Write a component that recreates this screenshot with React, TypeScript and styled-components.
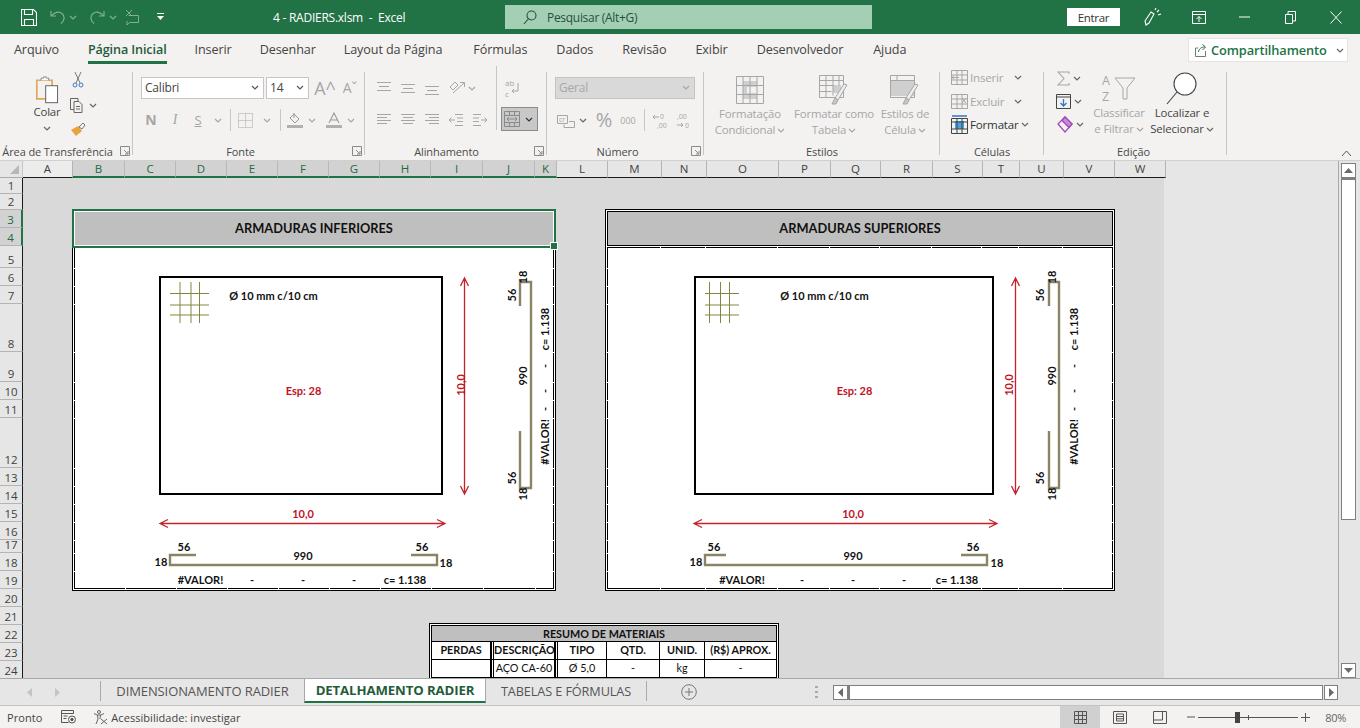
import React from "react";
import styled, { createGlobalStyle } from "styled-components";

const GREEN = "#217346";
const UI = '"Open Sans", "Noto Sans", sans-serif';
const CELL = 'Lato, "Liberation Sans", sans-serif';

const Global = createGlobalStyle`
  html, body { margin: 0; padding: 0; width: 1360px; height: 728px; overflow: hidden; background: #f3f2f1; }
  * { box-sizing: border-box; }
  svg { display: block; flex: none; }
`;

const Window = styled.div`
  width: 1360px; height: 728px; display: flex; flex-direction: column; overflow: hidden;
  font-family: ${UI}; font-size: 12px; color: #444; background: #f3f2f1;
`;

/* ---------- title bar ---------- */
const TitleBar = styled.header`
  height: 34px; flex: none; background: ${GREEN}; display: flex; align-items: center; color: #fff;
`;
const Slot = styled.span<{ $w: number; $ml?: number; $mt?: number }>`
  width: ${(p) => p.$w}px; margin-left: ${(p) => p.$ml ?? 0}px; margin-top: ${(p) => p.$mt ?? 0}px; flex: none;
  display: flex; align-items: center; justify-content: center;
`;
const DocTitle = styled.span`
  width: 135px; margin-left: 108px; flex: none; font-size: 12px; white-space: pre; letter-spacing: -0.25px;
`;
const SearchBox = styled.div`
  width: 367px; height: 24px; margin-left: 97px; flex: none; background: #a3d0b5; color: #24513a;
  display: flex; align-items: center; padding-left: 18px; gap: 10px; font-size: 12px; letter-spacing: -0.3px;
`;
const SignIn = styled.button`
  width: 53px; height: 18px; margin-left: 195px; flex: none; border: 0; padding: 0; background: #fff;
  color: #333; font-family: ${UI}; font-size: 11.5px; letter-spacing: -0.3px;
`;

/* ---------- tabs ---------- */
const TabBar = styled.nav`
  height: 32px; flex: none; display: flex; align-items: flex-start; padding-left: 14px; background: #f3f2f1;
`;
const Tab = styled.span<{ $active?: boolean; $mr?: number }>`
  height: 30px; margin-right: ${(p) => p.$mr ?? 29}px; padding-top: 7px; font-size: 12.6px; line-height: 18px; letter-spacing: -0.1px;
  color: ${(p) => (p.$active ? "#1f5c3a" : "#444")}; font-weight: ${(p) => (p.$active ? 600 : 400)};
  border-bottom: ${(p) => (p.$active ? `3px solid ${GREEN}` : "3px solid transparent")};
  white-space: nowrap;
`;
const ShareButton = styled.div`
  position: absolute; left: 1188px; top: 38px; width: 160px; height: 24px; background: #fff;
  border: 1px solid #e6e4e2; display: flex; align-items: center; padding-left: 6px; gap: 3px;
  color: ${GREEN}; font-size: 12.8px; font-weight: 600; letter-spacing: -0.1px;
`;

/* ---------- ribbon ---------- */
const Ribbon = styled.div`
  height: 95px; flex: none; display: flex; background: #f3f2f1; position: relative;
  border-bottom: 1px solid #d2d0ce;
`;
const Group = styled.section<{ $w: number }>`
  width: ${(p) => p.$w}px; height: 94px; flex: none; position: relative; display: flex; flex-direction: column;
  &::after { content: ""; position: absolute; right: 0; top: 6px; bottom: 5px; width: 1px; background: #c8c6c4; }
`;
const GroupBody = styled.div<{ $pl?: number; $dir?: string }>`
  height: 78px; flex: none; display: flex; flex-direction: ${(p) => p.$dir ?? "row"};
  padding-left: ${(p) => p.$pl ?? 0}px;
`;
const GroupLabel = styled.div<{ $pr?: number }>`
  height: 16px; text-align: center; padding-right: ${(p) => p.$pr ?? 0}px; font-size: 11px; line-height: 16px;
  letter-spacing: -0.1px; color: #4a4a4a; white-space: nowrap;
`;
const Launcher = styled.span`
  position: absolute; right: 3px; bottom: 4px;
`;
const ToolRow = styled.div<{ $mt?: number; $h?: number }>`
  display: flex; align-items: center; height: ${(p) => p.$h ?? 22}px; margin-top: ${(p) => p.$mt ?? 0}px;
`;
const Select = styled.div<{ $w: number; $ml?: number; $off?: boolean }>`
  width: ${(p) => p.$w}px; height: 22px; margin-left: ${(p) => p.$ml ?? 0}px; flex: none;
  background: ${(p) => (p.$off ? "#d9d9d9" : "#fff")}; border: 1px solid ${(p) => (p.$off ? "#c4c4c4" : "#c8c6c4")};
  display: flex; align-items: center; justify-content: space-between; padding: 0 4px 2px 3px;
  font-size: 12px; letter-spacing: -0.2px; color: ${(p) => (p.$off ? "#a8a8a8" : "#444")};
`;
const Divider = styled.span<{ $h: number; $ml?: number; $mr?: number }>`
  width: 1px; height: ${(p) => p.$h}px; flex: none; background: #c8c6c4;
  margin-left: ${(p) => p.$ml ?? 0}px; margin-right: ${(p) => p.$mr ?? 0}px;
`;
const Glyph = styled.span<{ $size?: number; $w?: number; $color?: string; $italic?: boolean; $serif?: boolean; $under?: boolean }>`
  font-size: ${(p) => p.$size ?? 13}px; font-weight: ${(p) => (p.$w ? p.$w : 400)}; color: ${(p) => p.$color ?? "#a6a6a6"};
  font-style: ${(p) => (p.$italic ? "italic" : "normal")};
  font-family: ${(p) => (p.$serif ? '"Liberation Serif", serif' : UI)};
  text-decoration: ${(p) => (p.$under ? "underline" : "none")}; line-height: 1;
`;
const MergeButton = styled.div<{ $ml: number }>`
  width: 37px; height: 24px; margin-left: ${(p) => p.$ml}px; flex: none; background: #c8c8c8; border: 1px solid #8a8a8a;
  display: flex; align-items: center; justify-content: space-between; padding: 0 4px 0 2px;
`;
const Large = styled.div<{ $w: number; $ml?: number; $off?: boolean }>`
  width: ${(p) => p.$w}px; margin-left: ${(p) => p.$ml ?? 0}px; flex: none; display: flex; flex-direction: column; align-items: center;
  color: ${(p) => (p.$off ? "#a6a6a6" : "#444")}; font-size: 11.4px; line-height: 16px; letter-spacing: -0.15px; white-space: nowrap;
`;
const LargeIcon = styled.div<{ $h?: number; $top?: number }>`
  height: ${(p) => p.$h ?? 33}px; margin-top: ${(p) => p.$top ?? 7}px; display: flex; align-items: center;
`;
const Line = styled.span`
  display: flex; align-items: center; gap: 2px; height: 16px;
`;
const CellTool = styled.div<{ $off?: boolean }>`
  height: 23.5px; display: flex; align-items: center; gap: 2px; padding-left: 11px; white-space: nowrap;
  font-size: 11.6px; letter-spacing: -0.2px; color: ${(p) => (p.$off ? "#a6a6a6" : "#333")};
`;
const StackCol = styled.div<{ $w: number }>`
  width: ${(p) => p.$w}px; flex: none; padding-top: 1px; display: flex; flex-direction: column;
`;
const Collapse = styled.span`
  position: absolute; right: 8px; bottom: 3px;
`;

/* ---------- grid ---------- */
const Workspace = styled.div`
  height: 517px; flex: none; display: flex; background: #e6e6e6;
`;
const GridColumn = styled.div`
  width: 1339px; flex: none; display: flex; flex-direction: column; border-right: 1px solid #a8a8a8;
`;
const ColHeaders = styled.div`
  height: 17px; flex: none; display: flex; background: #e6e6e6;
`;
const Corner = styled.div`
  width: 23px; flex: none; background: #e6e6e6; border-right: 1px solid #c8c8c8; border-bottom: 1px solid #aaa;
  display: flex; align-items: flex-end; justify-content: flex-end; padding: 0 3px 3px 0;
`;
const ColHead = styled.div<{ $w: number; $sel?: boolean; $light?: boolean }>`
  width: ${(p) => p.$w}px; flex: none; text-align: center; font-size: 11.5px; line-height: 15px;
  color: ${(p) => (p.$sel ? "#1f6b42" : "#3f3f3f")};
  background: ${(p) => (p.$sel ? "#d2d2d2" : p.$light ? "#ececec" : "#e6e6e6")};
  border-right: 1px solid ${(p) => (p.$sel ? "#b8b8b8" : "#b4b4b4")};
  border-bottom: ${(p) => (p.$sel ? `2px solid ${GREEN}` : "1px solid #1a1a1a")};
`;
const GridBody = styled.div`
  flex: 1; min-height: 0; display: flex; overflow: hidden;
`;
const RowHeads = styled.div`
  width: 23px; flex: none; display: flex; flex-direction: column; background: #e6e6e6;
`;
const RowHead = styled.div<{ $h: number; $sel?: boolean }>`
  height: ${(p) => p.$h}px; flex: none; display: flex; align-items: flex-end; justify-content: center;
  font-size: 11.5px; line-height: 15px; color: ${(p) => (p.$sel ? "#1f6b42" : "#3f3f3f")};
  background: ${(p) => (p.$sel ? "#d2d2d2" : "#e6e6e6")};
  border-bottom: 1px solid #b4b4b4;
  border-right: ${(p) => (p.$sel ? `2px solid ${GREEN}` : "1px solid #1a1a1a")};
`;
const Sheet = styled.div`
  width: 1141px; flex: none; background: #d9d9d9; padding: 31px 0 0 49px; overflow: hidden;
`;
const PanelRow = styled.div`
  display: flex; gap: 49px;
`;
const Panel = styled.div<{ $w: number }>`
  width: ${(p) => p.$w}px; height: 382px; flex: none; position: relative; background: #fff;
  border: 1px solid #000; padding: 1px; display: flex; flex-direction: column;
`;
const PanelTitle = styled.div`
  height: 35px; flex: none; margin-bottom: 1px; padding-bottom: 2px; background: #bfbfbf; border: 1px solid #000; display: flex; align-items: center; justify-content: center;
  font: 700 12.8px ${CELL}; color: #111;
`;
const Selection = styled.div`
  position: absolute; left: -1px; top: -1px; right: -1px; height: 39px; border: 2px solid ${GREEN};
  box-shadow: inset 0 0 0 1px #fff;
  &::after { content: ""; position: absolute; right: -4px; bottom: -4px; width: 6px; height: 6px; background: ${GREEN}; border: 1px solid #fff; }
`;
const DrawText = styled.text.attrs({ dy: -1 })<{ $red?: boolean; $size?: number; $weight?: number }>`
  font-family: ${CELL}; font-size: ${(p) => p.$size ?? 11}px; font-weight: ${(p) => p.$weight ?? 700};
  fill: ${(p) => (p.$red ? "#c0141f" : "#111")};
  text-anchor: middle; dominant-baseline: central;
`;
const Summary = styled.div`
  width: 350px; margin: 32px 0 0 357px; border: 1px solid #000; padding: 1px; background: #fff;
  font-family: ${CELL}; font-size: 10.8px; color: #111;
`;
const SummaryTitle = styled.div`
  height: 17px; background: #bfbfbf; border: 1px solid #000; text-align: center; font-weight: 700; line-height: 15px;
`;
const SummaryRow = styled.div`
  display: flex; height: 18px;
`;
const SummaryCell = styled.div<{ $w: number; $bold?: boolean; $dbl?: boolean }>`
  width: ${(p) => p.$w}px; flex: none; text-align: center; line-height: 16px; font-weight: ${(p) => (p.$bold ? 700 : 400)};
  border-bottom: 1px solid #000; border-right: 1px solid #000;
  border-left: ${(p) => (p.$dbl ? "3px double #000" : "0")};
  white-space: nowrap; overflow: hidden;
  &:first-child { border-left: 1px solid #000; }
`;
const VScroll = styled.div`
  width: 21px; flex: none; display: flex; flex-direction: column; padding: 2px 0 0 2px;
`;
const ScrollButton = styled.div`
  width: 15px; height: 15px; flex: none; background: #fff; border: 1px solid #7f7f7f;
  display: flex; align-items: center; justify-content: center;
`;
const VThumb = styled.div`
  width: 15px; height: 342px; flex: none; background: #fff; border: 1px solid #7f7f7f; border-top-width: 2px;
`;
const Grow = styled.div`
  flex: 1;
`;

/* ---------- sheet tabs ---------- */
const SheetBar = styled.div`
  height: 28px; flex: none; display: flex; align-items: flex-start; background: #e6e6e6;
  border-top: 1px solid #a8a8a8; border-bottom: 1px solid #c4c4c4;
`;
const SheetTab = styled.div<{ $active?: boolean; $w: number; $size?: number }>`
  width: ${(p) => p.$w}px; height: 24px; flex: none; display: flex; align-items: center; justify-content: center;
  font-size: ${(p) => p.$size ?? 13}px; letter-spacing: -0.1px; white-space: nowrap;
  background: ${(p) => (p.$active ? "#fff" : "transparent")}; color: ${(p) => (p.$active ? "#1f5c3a" : "#555")};
  font-weight: ${(p) => (p.$active ? 700 : 400)};
  border-bottom: ${(p) => (p.$active ? `2px solid ${GREEN}` : "0")};
  border-left: ${(p) => (p.$active ? "1px solid #a8a8a8" : "0")};
  border-right: ${(p) => (p.$active ? "1px solid #a8a8a8" : "0")};
`;
const BarSep = styled.span<{ $ml: number }>`
  width: 1px; height: 20px; margin: 2px 0 0 ${(p) => p.$ml}px; background: #aaa; flex: none;
`;
const BarSlot = styled.span<{ $w: number; $ml?: number }>`
  width: ${(p) => p.$w}px; height: 26px; margin-left: ${(p) => p.$ml ?? 0}px; flex: none; display: flex; align-items: center; justify-content: center;
`;
const HScroll = styled.div`
  width: 505px; height: 15px; margin: 6px 0 0 15px; flex: none; display: flex;
`;
const HButton = styled.div<{ $w: number; $ml?: number }>`
  width: ${(p) => p.$w}px; margin-left: ${(p) => p.$ml ?? 0}px; height: 15px; flex: none; background: #fff; border: 1px solid #7f7f7f;
  display: flex; align-items: center; justify-content: center;
`;
const HThumb = styled.div`
  flex: 1; background: #fff; border: 1px solid #7f7f7f; border-left-width: 2px;
`;

/* ---------- status bar ---------- */
const StatusBar = styled.footer`
  height: 22px; flex: none; display: flex; align-items: center; background: #f3f2f1; font-size: 11px; color: #444; padding-left: 7px;
`;
const StatusText = styled.span<{ $ml?: number }>`
  margin-left: ${(p) => p.$ml ?? 0}px; white-space: nowrap; letter-spacing: 0.05px;
`;
const ViewButton = styled.span<{ $active?: boolean; $w: number }>`
  width: ${(p) => p.$w}px; height: 22px; flex: none; display: flex; align-items: center; justify-content: center;
  background: ${(p) => (p.$active ? "#d0d0d0" : "transparent")};
`;
const ZoomTrack = styled.div`
  width: 100px; height: 1px; flex: none; margin: 0 3px; background: #555; position: relative;
`;
const ZoomThumb = styled.span`
  position: absolute; left: 37px; top: -5px; width: 5px; height: 11px; background: #444;
`;
const ZoomTick = styled.span`
  position: absolute; left: 50px; top: -2px; width: 1px; height: 5px; background: #555;
`;
const ZoomValue = styled.span`
  margin-left: 15px; font-size: 11px; color: #666; letter-spacing: -0.3px;
`;

/* ---------- icons ---------- */
const GR = "#a6a6a6";
const Chev = ({ c = "#666" }: { c?: string }) => (
  <svg width="8" height="5" viewBox="0 0 8 5"><path d="M1 1l3 3 3-3" fill="none" stroke={c} strokeWidth="1.2" /></svg>
);
const Launch = () => (
  <svg width="10" height="10" viewBox="0 0 10 10" fill="none" stroke="#8a8a8a"><path d="M.5 9.5v-9h9v9zM4 4l4 4M8 5v3H5" /></svg>
);
const SaveIcon = () => (
  <svg width="16" height="17" viewBox="0 0 16 17" fill="none" stroke="#fff" strokeWidth="1.1">
    <path d="M.5.5h12l3 3v13H.5z" /><path d="M3.5.5v5h8v-5M3.5 16.5v-6h9v6" />
  </svg>
);
const UndoIcon = ({ flip }: { flip?: boolean }) => (
  <svg width="16" height="16" viewBox="0 0 16 16" fill="none" stroke="#7fb095" strokeWidth="1.2" transform={flip ? "scale(-1 1)" : undefined}>
    <path d="M1 2v5h5M1.5 7C4 3 9 2 12 4.5s3 7-1 10" />
  </svg>
);
const TouchIcon = () => (
  <svg width="15" height="16" viewBox="0 0 15 16" fill="none" stroke="#7fb095">
    <path d="M4.5 6.5h10v7h-9L3 16v-4M2 1l6 6M8 1L2 7" />
  </svg>
);
const CustomizeIcon = () => (
  <svg width="9" height="8" viewBox="0 0 9 8" fill="#fff"><path d="M1 0h7v1H1zM1 3h7L4.5 7z" /></svg>
);
const SearchIcon = ({ c = "#24513a" }: { c?: string }) => (
  <svg width="14" height="15" viewBox="0 0 14 15" fill="none" stroke={c} strokeWidth="1.1"><circle cx="8.5" cy="5.5" r="4.5" /><path d="M5.2 9L1 14" /></svg>
);
const PenIcon = () => (
  <svg width="18" height="20" viewBox="0 0 18 20" fill="none" stroke="#fff" strokeWidth="1.1">
    <path d="M2 18l-1-4 6-9 3 2-5 9zM7 5l3 2M11 3l1-2M13 5l2-2M14 8l3-1" />
  </svg>
);
const DisplayIcon = () => (
  <svg width="14" height="13" viewBox="0 0 14 13" fill="none" stroke="#fff"><path d="M.5.5h13v12H.5zM.5 3.5h13M7 11V5.5M4.5 8L7 5.5 9.5 8" /></svg>
);
const MinIcon = () => <svg width="11" height="2" viewBox="0 0 11 2"><path d="M0 1h11" stroke="#fff" /></svg>;
const RestoreIcon = () => (
  <svg width="11" height="13" viewBox="0 0 11 13" fill="none" stroke="#fff"><path d="M.5 3.5h7v9h-7zM3 3V.5h7.5V10H8" /></svg>
);
const CloseIcon = () => <svg width="12" height="13" viewBox="0 0 12 13"><path d="M.5.5l11 12M11.5.5L.5 12.5" stroke="#fff" fill="none" /></svg>;

const PasteIcon = () => (
  <svg width="26" height="28" viewBox="0 0 30 33" fill="none">
    <path d="M3 5h18v22H3z" stroke="#e0a95a" strokeWidth="2" /><path d="M8 5V2.5h3V1h3v1.500h3V5" stroke="#7a7a7a" fill="#fff" />
    <rect x="13.500" y="11.500" width="14" height="20" fill="#fff" stroke="#4a4a4a" />
  </svg>
);
const ScissorsIcon = () => (
  <svg width="12" height="16" viewBox="0 0 12 16" fill="none"><path d="M3 0l5 11M9 0L4 11" stroke="#777" /><circle cx="3" cy="13" r="2" stroke="#3b7fc4" /><circle cx="9" cy="13" r="2" stroke="#3b7fc4" /></svg>
);
const CopyIcon = () => (
  <svg width="13" height="15" viewBox="0 0 13 15" fill="none" stroke="#666"><path d="M4 11.500H.5V.5H8V3" /><path d="M4 3.500h5l3 3v8H4zM6 8.500h4M6 11h4" /></svg>
);
const BrushIcon = () => (
  <svg width="16" height="15" viewBox="0 0 16 15"><path d="M1 8l7-4 4 5-6 5z" fill="#e8a33d" /><path d="M9 5l4-4 2 2-3 4z" fill="none" stroke="#777" /></svg>
);
const BordersIcon = () => (
  <svg width="15" height="15" viewBox="0 0 15 15" fill="none" stroke={GR} strokeDasharray="1 1"><path d="M.5.5h14v14H.5zM7.500.5v14M.5 7.500h14" /></svg>
);
const FillIcon = () => (
  <svg width="16" height="16" viewBox="0 0 16 16" fill="none"><path d="M3 6l4-4 5 5-4 4z" fill="#f3f2f1" stroke="#999" /><path d="M7 1v5" stroke="#999" /><rect y="13" width="16" height="3" fill="#b0b0b0" /></svg>
);
const FontColorIcon = () => (
  <svg width="16" height="16" viewBox="0 0 16 16" fill="none"><path d="M3 11L8 1l5 10M5 8h6" stroke="#999" strokeWidth="1.1" /><rect y="13" width="16" height="3" fill="#b0b0b0" /></svg>
);
const AlignIcon = ({ rows }: { rows: [number, number, number][] }) => (
  <svg width="16" height="14" viewBox="0 0 16 14" stroke={GR} fill="none">
    {rows.map(([y, a, b], i) => <path key={i} d={`M${a} ${y + 0.5}H${b}`} />)}
  </svg>
);
const OrientIcon = () => (
  <svg width="18" height="14" viewBox="0 0 18 14" fill="none" stroke={GR}><path d="M2 6l5-5 3 3-5 5zM5 12L16 2M12 1.500h4.500V6" /></svg>
);
const IndentIcon = ({ flip }: { flip?: boolean }) => (
  <svg width="16" height="12" viewBox="0 0 16 12" fill="none" stroke={GR} transform={flip ? "scale(-1 1)" : undefined}>
    <path d="M7 .5h8M9 4h6M9 7.500h6M7 11.500h8M7 6H1M3.500 3.500L1 6l2.500 2.500" />
  </svg>
);
const WrapIcon = () => (
  <svg width="18" height="22" viewBox="0 0 18 22" fill="none"><text x="1" y="9" fontSize="8" fontFamily="Open Sans" fill={GR}>ab</text><text x="1" y="20" fontSize="8" fontFamily="Open Sans" fill={GR}>c</text><path d="M14 6v8H8M10 12l-2 2 2 2" stroke={GR} /></svg>
);
const MergeIcon = () => (
  <svg width="16" height="16" viewBox="0 0 16 16" fill="none" stroke="#8a8a8a"><path d="M.5.5h15v15H.5zM.5 4.500h15M.5 11.500h15M5.500.5v4M10.500.5v4M5.500 11.500v4M10.500 11.500v4M3 8h10M5 6L3 8l2 2M11 6l2 2-2 2" /></svg>
);
const CurrencyIcon = () => (
  <svg width="18" height="15" viewBox="0 0 18 15" fill="none" stroke={GR}><path d="M.5 2.500h10v8H.5zM12 8.500h5.500v6H7v-3" /><text x="2" y="9" fontSize="7" fill={GR} stroke="none" fontFamily="Open Sans">cr</text></svg>
);
const IncDecIcon = ({ dec }: { dec?: boolean }) => (
  <svg width="16" height="17" viewBox="0 0 16 17" fill="none" stroke={GR}>
    <text x={dec ? 1 : 8} y="7" fontSize="7" fill={GR} stroke="none" fontFamily="Open Sans">{dec ? ",00" : "0"}</text>
    <text x={dec ? 9 : 5} y="16" fontSize="7" fill={GR} stroke="none" fontFamily="Open Sans">{dec ? "0" : ",00"}</text>
    <path d={dec ? "M1 13h6M5 11l2 2-2 2" : "M1 5h6M3 3L1 5l2 2"} />
  </svg>
);
const CondFormatIcon = () => (
  <svg width="28" height="28" viewBox="0 0 28 28" fill="none" stroke={GR}>
    <rect x="7" y="5" width="14" height="18" fill="#cfcfcf" stroke="none" /><rect x="11" y="11" width="10" height="6" fill="#f3f2f1" stroke="none" />
    <path d="M.5.5h27v27H.5zM.5 9.500h27M.5 18.500h27M7 .5v27M14 .5v27M21 .5v27" />
  </svg>
);
const TableFormatIcon = () => (
  <svg width="30" height="30" viewBox="0 0 30 30" fill="none" stroke={GR}>
    <rect x="14" y="10" width="8" height="8" fill="#cfcfcf" stroke="none" />
    <path d="M.5.5h24v22H.5zM.5 5.500h24M.5 10.500h14M.5 16.500h12M7 .5v22M14 .5v20M20 .5v10" />
    <path d="M28 10L19 25l-3-2 9-14z" fill="#eee" /><path d="M16 23l3 2-2 4-4 0z" fill="#c8c8c8" />
  </svg>
);
const CellStyleIcon = () => (
  <svg width="30" height="30" viewBox="0 0 30 30" fill="none" stroke={GR}>
    <rect x=".5" y="6" width="24" height="15" fill="#cfcfcf" stroke="none" />
    <path d="M.5.5h24v22H.5zM.5 5.500h24M7 .5v5" />
    <path d="M28 10L19 25l-3-2 9-14z" fill="#eee" /><path d="M16 23l3 2-2 4-4 0z" fill="#c8c8c8" />
  </svg>
);
const InsertIcon = ({ x }: { x?: boolean }) => (
  <svg width="17" height="15" viewBox="0 0 17 15" fill="none" stroke={GR}>
    <path d="M.5.5h16v14H.5zM.5 5h16M.5 10h16M6 .5v14M11 .5v14" />
    {x ? <path d="M11 4l4 5M15 4l-4 5" /> : <path d="M8 7.500H1M3 5.500l-2 2 2 2" />}
  </svg>
);
const FormatIcon = () => (
  <svg width="17" height="19" viewBox="0 0 17 19" fill="none">
    <rect x="4" y="6" width="9" height="8" fill="#4aa3e0" /><path d="M.5 3.500h16v15H.5zM.5 7h16M.5 14h16M6 3.500v15M11 3.500v15" stroke="#444" />
    <path d="M1 1h15" stroke="#2e78c7" strokeWidth="1.500" />
  </svg>
);
const SigmaIcon = () => (
  <svg width="13" height="15" viewBox="0 0 13 15" fill="none" stroke={GR} strokeWidth="1.100"><path d="M12 3V1H1l6 6.500L1 14h11v-2" /></svg>
);
const FillDownIcon = () => (
  <svg width="15" height="15" viewBox="0 0 15 15" fill="none"><path d="M.5.5h14v14H.5z" stroke="#444" /><path d="M.5 3h14" stroke="#444" /><path d="M7.500 5v7M4.500 9l3 3 3-3" stroke="#2e78c7" strokeWidth="1.300" /></svg>
);
const EraserIcon = () => (
  <svg width="16" height="17" viewBox="0 0 16 17" fill="none" stroke="#a14bb8" strokeWidth="1.300"><path d="M8 1l7 7-7 8-7-8z" /><path d="M8 1l7 7-3 3.500-7-7z" fill="#c98bd8" /></svg>
);
const SortIcon = () => (
  <svg width="36" height="34" viewBox="0 0 36 34" fill="none" stroke={GR}>
    <text x="1" y="13.500" fontSize="12.500" fill={GR} stroke="none" fontFamily="Open Sans">A</text>
    <text x="1" y="30" fontSize="12.500" fill={GR} stroke="none" fontFamily="Open Sans">Z</text>
    <path d="M14 7h20l-8 10v11h-4V17z" />
  </svg>
);
const BigFindIcon = () => (
  <svg width="32" height="33" viewBox="0 0 32 33" fill="none" stroke="#444" strokeWidth="1.100"><circle cx="19" cy="12" r="11" fill="#fff" /><path d="M11 20L1 32" /></svg>
);
const ShareIcon = () => (
  <svg width="13" height="14" viewBox="0 0 13 14" fill="none" stroke="#777"><path d="M3 5H.5v8.500h10V8" /><path d="M3.500 9c0-3 3-5 6-5M7.500 1.500l3 2.500-3 3" stroke={GREEN} /></svg>
);
const Tri = ({ dir, c = "#6a6a6a" }: { dir: "u" | "d" | "l" | "r"; c?: string }) => {
  const d = { u: "M0 5L4.500 0 9 5z", d: "M0 0h9L4.500 5z", l: "M5 0v9L0 4.500z", r: "M0 0v9l5-4.500z" }[dir];
  const vert = dir === "u" || dir === "d";
  return <svg width={vert ? 9 : 5} height={vert ? 5 : 9} viewBox={vert ? "0 0 9 5" : "0 0 5 9"}><path d={d} fill={c} /></svg>;
};
const PlusCircle = () => (
  <svg width="16" height="16" viewBox="0 0 16 16" fill="none" stroke="#777"><circle cx="8" cy="8" r="7.300" /><path d="M8 4v8M4 8h8" /></svg>
);
const Dots = () => (
  <svg width="3" height="12" viewBox="0 0 3 12" fill="#aaa"><rect width="3" height="2" /><rect y="5" width="3" height="2" /><rect y="10" width="3" height="2" /></svg>
);
const MacroIcon = () => (
  <svg width="15" height="14" viewBox="0 0 15 14" fill="none" stroke="#555"><path d="M.5.5h12v3H.5zM.5 3.500v9h7M2.500 6h4M2.500 8.500h3" /><circle cx="11" cy="9.500" r="3.500" /><circle cx="11" cy="9.500" r="1.200" fill="#555" /></svg>
);
const AccessIcon = () => (
  <svg width="15" height="15" viewBox="0 0 15 15" fill="none" stroke="#666"><circle cx="6" cy="2" r="1.500" /><path d="M1 3.500l3 1.500h4l3-1.500M4.500 5l.5 4-2 5M7.500 5L7 9M8 9l6 5M14 9l-6 5" /></svg>
);
const NormalViewIcon = () => (
  <svg width="13" height="13" viewBox="0 0 13 13" fill="none" stroke="#555"><path d="M.5.5h12v12H.5zM.5 4.500h12M.5 8.500h12M4.500.5v12M8.500.5v12" /></svg>
);
const PageViewIcon = () => (
  <svg width="14" height="13" viewBox="0 0 14 13" fill="none" stroke="#555"><path d="M.5.5h13v12H.5zM3.500 3h7v7h-7zM3.500 5.500h7M3.500 7.800h7" /></svg>
);
const BreakViewIcon = () => (
  <svg width="14" height="13" viewBox="0 0 14 13" fill="none" stroke="#555"><path d="M.5.5h13v12H.5zM.5 9h9V.5" /></svg>
);
const MinusSmall = () => <svg width="8" height="2" viewBox="0 0 8 2"><path d="M0 1h8" stroke="#555" /></svg>;
const PlusSmall = () => <svg width="9" height="9" viewBox="0 0 9 9"><path d="M0 4.500h9M4.500 0v9" stroke="#555" /></svg>;

/* ---------- sheet data ---------- */
const COLS: [string, number][] = [
  ["A", 50], ["B", 52], ["C", 51], ["D", 51], ["E", 51], ["F", 51], ["G", 51], ["H", 51], ["I", 52], ["J", 52], ["K", 22],
  ["L", 51], ["M", 54], ["N", 45], ["O", 72], ["P", 52], ["Q", 50], ["R", 52], ["S", 50], ["T", 37], ["U", 44], ["V", 51], ["W", 51],
];
const ROWS = [16, 16, 18, 18, 22, 18, 18, 48, 30, 18, 18, 50, 18, 18, 18, 18, 13, 18, 18, 18, 18, 18, 18, 18];
const ROW_EDGES = [268, 286, 304, 352, 382, 400, 418, 468, 486, 504, 522, 540, 553, 571];

type PanelSpec = {
  x0: number; w: number; rect: [number, number]; mesh: [number[], number, number]; note: number; esp: number;
  vArrow: number; vLabel: number; bar: [number, number]; vLabels: [number, number, number, number];
  hArrow: [number, number]; hMid: number; hBar: [number, number, number, number]; h56: [number, number]; h18: [number, number];
  dashes: number[]; valor: number; c: number; colEdges: number[];
};
const LEFT: PanelSpec = {
  x0: 74, w: 480, rect: [160, 442], mesh: [[180, 191, 199.5], 170, 209], note: 273.5, esp: 303.5,
  vArrow: 464.5, vLabel: 461, bar: [520, 531], vLabels: [523, 512, 545, 0],
  hArrow: [160, 445], hMid: 303, hBar: [196, 170, 437, 411], h56: [184, 422], h18: [161, 446],
  dashes: [252, 303, 354], valor: 200.5, c: 405, colEdges: [125, 176, 227, 278, 329, 380, 431, 483, 535],
};
const RIGHT: PanelSpec = {
  x0: 607, w: 506, rect: [695, 993], mesh: [[709.5, 720.5, 729.5], 705, 739], note: 824.5, esp: 854.5,
  vArrow: 1015.5, vLabel: 1009, bar: [1049, 1059], vLabels: [1052, 1040, 1074, 0],
  hArrow: [694, 997], hMid: 853, hBar: [726, 705, 987, 961], h56: [714, 973], h18: [696, 997],
  dashes: [802, 853, 904], valor: 742, c: 957, colEdges: [660, 705, 777, 829, 879, 931, 981, 1018, 1062],
};

const RED = "#c4232c";
const BAR = "#8a8464";
const MESH = "#85853f";

const Arrow = ({ x1, y1, x2, y2 }: { x1: number; y1: number; x2: number; y2: number }) => {
  const vertical = x1 === x2;
  const heads = vertical
    ? `M${x1 - 4} ${y1 + 8}L${x1} ${y1}L${x1 + 4} ${y1 + 8}M${x2 - 4} ${y2 - 8}L${x2} ${y2}L${x2 + 4} ${y2 - 8}`
    : `M${x1 + 8} ${y1 - 4}L${x1} ${y1}L${x1 + 8} ${y1 + 4}M${x2 - 8} ${y2 - 4}L${x2} ${y2}L${x2 - 8} ${y2 + 4}`;
  return <path d={`M${x1} ${y1}L${x2} ${y2}${heads}`} fill="none" stroke={RED} strokeWidth="1.3" />;
};

const VText = ({ x, y, children, red }: { x: number; y: number; children: React.ReactNode; red?: boolean }) => (
  <DrawText x={x} y={y} $red={red} transform={`rotate(-90 ${x} ${y})`}>{children}</DrawText>
);

const Drawing = ({ s }: { s: PanelSpec }) => {
  const bottom = 588.5;
  const [l, r] = s.rect;
  return (
    <svg width={s.w} height={342} viewBox={`${s.x0} 247 ${s.w} 342`}>
      <rect x={s.x0 + 0.5} y={247.5} width={s.w - 1} height={341} fill="none" stroke="#000" />
      {ROW_EDGES.map((y) => (
        <path key={y} d={`M${s.x0} ${y + 0.5}h2M${s.x0 + s.w - 2} ${y + 0.5}h2`} stroke="#fff" />
      ))}
      {s.colEdges.map((x) => (
        <path key={x} d={`M${x + 0.5} ${bottom - 1}v2M${x + 0.5} 247v2`} stroke="#fff" />
      ))}
      <rect x={l} y={277} width={r - l} height={217} fill="#fff" stroke="#000" strokeWidth="2" />
      {s.mesh[0].map((x) => <path key={x} d={`M${x} 282V323`} stroke={MESH} />)}
      {[293.5, 305, 315].map((y) => <path key={y} d={`M${s.mesh[1]} ${y}H${s.mesh[2]}`} stroke={MESH} />)}
      <DrawText x={s.note} y={296}>Ø 10 mm c/10 cm</DrawText>
      <DrawText x={s.esp} y={391} $red>Esp: 28</DrawText>

      <Arrow x1={s.vArrow} y1={278} x2={s.vArrow} y2={494} />
      <VText x={s.vLabel} y={385} red>10,0</VText>
      <path d={`M${s.bar[0]} 306V282H${s.bar[1]}V488H${s.bar[0]}V431`} fill="none" stroke={BAR} strokeWidth="2.4" />
      <VText x={s.bar[0] + 3} y={277}>18</VText>
      <VText x={s.vLabels[1]} y={295}>56</VText>
      <VText x={s.bar[0] + 3} y={376}>990</VText>
      <VText x={s.vLabels[2]} y={329}>c= 1.138</VText>
      {[366, 391, 409].map((y) => <VText key={y} x={s.vLabels[2]} y={y}>-</VText>)}
      <VText x={s.vLabels[2]} y={442}>#VALOR!</VText>
      <VText x={s.vLabels[1]} y={478}>56</VText>
      <VText x={s.bar[0] + 3} y={494}>18</VText>

      <Arrow x1={s.hArrow[0]} y1={523.5} x2={s.hArrow[1]} y2={523.5} />
      <DrawText x={s.hMid} y={514} $red>10,0</DrawText>
      <path d={`M${s.hBar[0]} 555H${s.hBar[1]}V565H${s.hBar[2]}V555H${s.hBar[3]}`} fill="none" stroke={BAR} strokeWidth="2.4" />
      <DrawText x={s.h56[0]} y={547}>56</DrawText>
      <DrawText x={s.h56[1]} y={547}>56</DrawText>
      <DrawText x={s.h18[0]} y={562}>18</DrawText>
      <DrawText x={s.h18[1]} y={563}>18</DrawText>
      <DrawText x={s.hMid} y={556}>990</DrawText>
      <DrawText x={s.valor} y={580}>#VALOR!</DrawText>
      {s.dashes.map((x) => <DrawText key={x} x={x} y={580}>-</DrawText>)}
      <DrawText x={s.c} y={580}>c= 1.138</DrawText>
    </svg>
  );
};

const SUM_W = [60, 64, 52, 53, 45, 72];

export default function App() {
  return (
    <Window>
      <Global />
      <TitleBar>
        <Slot $w={16} $ml={21}><SaveIcon /></Slot>
        <Slot $w={16} $ml={13}><UndoIcon /></Slot>
        <Slot $w={8} $ml={3}><Chev c="#7fb095" /></Slot>
        <Slot $w={16} $ml={12}><UndoIcon flip /></Slot>
        <Slot $w={8} $ml={4}><Chev c="#7fb095" /></Slot>
        <Slot $w={15} $ml={7}><TouchIcon /></Slot>
        <Slot $w={9} $ml={17}><CustomizeIcon /></Slot>
        <DocTitle>4 - RADIERS.xlsm  -  Excel</DocTitle>
        <SearchBox><SearchIcon /><span>Pesquisar (Alt+G)</span></SearchBox>
        <SignIn>Entrar</SignIn>
        <Slot $w={18} $ml={24}><PenIcon /></Slot>
        <Slot $w={14} $ml={30}><DisplayIcon /></Slot>
        <Slot $w={11} $ml={33}><MinIcon /></Slot>
        <Slot $w={11} $ml={35}><RestoreIcon /></Slot>
        <Slot $w={12} $ml={34}><CloseIcon /></Slot>
      </TitleBar>

      <TabBar>
        <Tab>Arquivo</Tab>
        <Tab $active $mr={28}>Página Inicial</Tab>
        <Tab $mr={28}>Inserir</Tab>
        <Tab $mr={28}>Desenhar</Tab>
        <Tab $mr={31}>Layout da Página</Tab>
        <Tab $mr={29}>Fórmulas</Tab>
        <Tab>Dados</Tab>
        <Tab>Revisão</Tab>
        <Tab>Exibir</Tab>
        <Tab $mr={30}>Desenvolvedor</Tab>
        <Tab>Ajuda</Tab>
        <ShareButton>
          <ShareIcon />
          <span>Compartilhamento</span>
          <Slot $w={8} $ml={6}><Chev /></Slot>
        </ShareButton>
      </TabBar>

      <Ribbon>
        <Group $w={133}>
          <GroupBody $pl={32}>
            <Large $w={30}>
              <LargeIcon $top={10} $h={28}><PasteIcon /></LargeIcon>
              <span>Colar</span>
              <Line><Chev /></Line>
            </Large>
            <StackCol $w={30}>
              <Slot $w={16} $ml={8} $mt={5}><ScissorsIcon /></Slot>
              <ToolRow $mt={5} $h={24}><Slot $w={13} $ml={8}><CopyIcon /></Slot><Slot $w={8} $ml={6}><Chev /></Slot></ToolRow>
              <Slot $w={16} $ml={8} $mt={5}><BrushIcon /></Slot>
            </StackCol>
          </GroupBody>
          <GroupLabel $pr={18}>Área de Transferência</GroupLabel>
          <Launcher><Launch /></Launcher>
        </Group>

        <Group $w={232}>
          <GroupBody $dir="column" $pl={8}>
            <ToolRow $mt={11}>
              <Select $w={123}><span>Calibri</span><Chev c="#555" /></Select>
              <Select $w={43} $ml={2}><span>14</span><Chev c="#555" /></Select>
              <Slot $w={20} $ml={6}><Glyph $size={18}>A^</Glyph></Slot>
              <Slot $w={20} $ml={5}><Glyph $size={14}>Aˇ</Glyph></Slot>
            </ToolRow>
            <ToolRow $mt={9} $h={24}>
              <Slot $w={20}><Glyph $w={700} $size={14}>N</Glyph></Slot>
              <Slot $w={24} $ml={2}><Glyph $italic $serif $size={14}>I</Glyph></Slot>
              <Slot $w={22}><Glyph $under>S</Glyph></Slot>
              <Slot $w={18}><Chev c={GR} /></Slot>
              <Divider $h={22} $ml={3} />
              <Slot $w={15} $ml={7}><BordersIcon /></Slot>
              <Slot $w={8} $ml={10}><Chev c={GR} /></Slot>
              <Divider $h={22} $ml={9} />
              <Slot $w={16} $ml={6}><FillIcon /></Slot>
              <Slot $w={8} $ml={5}><Chev c={GR} /></Slot>
              <Slot $w={16} $ml={10}><FontColorIcon /></Slot>
              <Slot $w={8} $ml={5}><Chev c={GR} /></Slot>
            </ToolRow>
          </GroupBody>
          <GroupLabel $pr={17}>Fonte</GroupLabel>
          <Launcher><Launch /></Launcher>
        </Group>

        <Group $w={182}>
          <GroupBody>
            <div>
              <ToolRow $mt={11}>
                <Slot $w={16} $ml={11}><AlignIcon rows={[[1, 1, 15], [5, 3, 13], [9, 1, 15]]} /></Slot>
                <Slot $w={16} $ml={8}><AlignIcon rows={[[3, 1, 15], [7, 3, 13], [11, 1, 15]]} /></Slot>
                <Slot $w={16} $ml={8}><AlignIcon rows={[[5, 1, 15], [9, 3, 13], [13, 1, 15]]} /></Slot>
                <Slot $w={18} $ml={8}><OrientIcon /></Slot>
                <Slot $w={8} $ml={2}><Chev c={GR} /></Slot>
              </ToolRow>
              <ToolRow $mt={9} $h={24}>
                <Slot $w={16} $ml={11}><AlignIcon rows={[[1, 1, 15], [4, 1, 11], [7, 1, 15], [10, 1, 11]]} /></Slot>
                <Slot $w={16} $ml={8}><AlignIcon rows={[[1, 1, 15], [4, 3, 13], [7, 1, 15], [10, 3, 13]]} /></Slot>
                <Slot $w={16} $ml={8}><AlignIcon rows={[[1, 1, 15], [4, 5, 15], [7, 1, 15], [10, 5, 15]]} /></Slot>
                <Slot $w={16} $ml={8}><IndentIcon /></Slot>
                <Slot $w={16} $ml={8}><IndentIcon flip /></Slot>
              </ToolRow>
            </div>
            <Divider $h={64} $ml={8} />
            <div>
              <ToolRow $mt={11}><Slot $w={18} $ml={7}><WrapIcon /></Slot></ToolRow>
              <ToolRow $mt={8} $h={24}>
                <MergeButton $ml={4}><MergeIcon /><Chev c="#333" /></MergeButton>
              </ToolRow>
            </div>
          </GroupBody>
          <GroupLabel $pr={19}>Alinhamento</GroupLabel>
          <Launcher><Launch /></Launcher>
        </Group>

        <Group $w={157}>
          <GroupBody $dir="column" $pl={8}>
            <ToolRow $mt={11}>
              <Select $w={140} $off><span>Geral</span><Chev c={GR} /></Select>
            </ToolRow>
            <ToolRow $mt={9} $h={24}>
              <Slot $w={18} $ml={2}><CurrencyIcon /></Slot>
              <Slot $w={8} $ml={4}><Chev /></Slot>
              <Slot $w={22} $ml={6}><Glyph $size={20}>%</Glyph></Slot>
              <Slot $w={18} $ml={4}><Glyph $size={9}>000</Glyph></Slot>
              <Divider $h={22} $ml={7} />
              <Slot $w={16} $ml={7}><IncDecIcon /></Slot>
              <Slot $w={16} $ml={8}><IncDecIcon dec /></Slot>
            </ToolRow>
          </GroupBody>
          <GroupLabel $pr={16}>Número</GroupLabel>
          <Launcher><Launch /></Launcher>
        </Group>

        <Group $w={236}>
          <GroupBody $pl={8}>
            <Large $w={76} $off>
              <LargeIcon><CondFormatIcon /></LargeIcon>
              <span>Formatação</span>
              <Line>Condicional <Chev c={GR} /></Line>
            </Large>
            <Large $w={84} $ml={4} $off>
              <LargeIcon><TableFormatIcon /></LargeIcon>
              <span>Formatar como</span>
              <Line>Tabela <Chev c={GR} /></Line>
            </Large>
            <Large $w={50} $ml={4} $off>
              <LargeIcon><CellStyleIcon /></LargeIcon>
              <span>Estilos de</span>
              <Line>Célula <Chev c={GR} /></Line>
            </Large>
          </GroupBody>
          <GroupLabel>Estilos</GroupLabel>
        </Group>

        <Group $w={104}>
          <GroupBody $dir="column">
            <CellTool $off><InsertIcon /><span>Inserir</span><Slot $w={8} $ml={9}><Chev /></Slot></CellTool>
            <CellTool $off><InsertIcon x /><span>Excluir</span><Slot $w={8} $ml={8}><Chev /></Slot></CellTool>
            <CellTool><FormatIcon /><span>Formatar</span><Chev /></CellTool>
          </GroupBody>
          <GroupLabel>Células</GroupLabel>
        </Group>

        <Group $w={183}>
          <GroupBody $pl={12}>
            <StackCol $w={34}>
              <ToolRow><Slot $w={13} $ml={1}><SigmaIcon /></Slot><Slot $w={8} $ml={3}><Chev /></Slot></ToolRow>
              <ToolRow $mt={1}><Slot $w={15}><FillDownIcon /></Slot><Slot $w={8} $ml={3}><Chev /></Slot></ToolRow>
              <ToolRow $mt={1}><Slot $w={16} $ml={1}><EraserIcon /></Slot><Slot $w={8} $ml={3}><Chev /></Slot></ToolRow>
            </StackCol>
            <Large $w={58} $off>
              <LargeIcon $top={5} $h={34}><SortIcon /></LargeIcon>
              <span>Classificar</span>
              <Line>e Filtrar <Chev c={GR} /></Line>
            </Large>
            <Large $w={68}>
              <LargeIcon $top={6} $h={33}><BigFindIcon /></LargeIcon>
              <Line>Localizar e</Line>
              <Line>Selecionar <Chev /></Line>
            </Large>
          </GroupBody>
          <GroupLabel $pr={4}>Edição</GroupLabel>
        </Group>

        <Collapse><svg width="11" height="7" viewBox="0 0 11 7"><path d="M1 6l4.500-5L10 6" fill="none" stroke="#555" /></svg></Collapse>
      </Ribbon>

      <Workspace>
        <GridColumn>
          <ColHeaders>
            <Corner><svg width="9" height="9" viewBox="0 0 9 9"><path d="M9 0v9H0z" fill="#b8b8b8" /></svg></Corner>
            {COLS.map(([name, w], i) => (
              <ColHead key={name} $w={w} $sel={i >= 1 && i <= 10} $light={i === 0}>{name}</ColHead>
            ))}
            <Grow />
          </ColHeaders>
          <GridBody>
            <RowHeads>
              {ROWS.map((h, i) => (
                <RowHead key={i} $h={h} $sel={i === 2 || i === 3}>{i + 1}</RowHead>
              ))}
            </RowHeads>
            <Sheet>
              <PanelRow>
                <Panel $w={484}>
                  <PanelTitle>ARMADURAS INFERIORES</PanelTitle>
                  <Drawing s={LEFT} />
                  <Selection />
                </Panel>
                <Panel $w={510}>
                  <PanelTitle>ARMADURAS SUPERIORES</PanelTitle>
                  <Drawing s={RIGHT} />
                </Panel>
              </PanelRow>
              <Summary>
                <SummaryTitle>RESUMO DE MATERIAIS</SummaryTitle>
                <SummaryRow>
                  {["PERDAS", "DESCRIÇÃO", "TIPO", "QTD.", "UNID.", "(R$) APROX."].map((t, i) => (
                    <SummaryCell key={t} $w={SUM_W[i]} $bold $dbl={i === 1 || i === 2}>{t}</SummaryCell>
                  ))}
                </SummaryRow>
                <SummaryRow>
                  {["", "AÇO CA-60", "Ø 5,0", "-", "kg", "-"].map((t, i) => (
                    <SummaryCell key={i} $w={SUM_W[i]} $dbl={i === 1 || i === 2}>{t}</SummaryCell>
                  ))}
                </SummaryRow>
              </Summary>
            </Sheet>
          </GridBody>
        </GridColumn>
        <VScroll>
          <ScrollButton><Tri dir="u" /></ScrollButton>
          <VThumb />
          <Grow />
          <ScrollButton><Tri dir="d" /></ScrollButton>
        </VScroll>
      </Workspace>

      <SheetBar>
        <BarSlot $w={6} $ml={26}><Tri dir="l" c="#c4c4c4" /></BarSlot>
        <BarSlot $w={6} $ml={22}><Tri dir="r" c="#c4c4c4" /></BarSlot>
        <BarSep $ml={40} />
        <SheetTab $w={203}>DIMENSIONAMENTO RADIER</SheetTab>
        <SheetTab $w={182} $size={13.2} $active>DETALHAMENTO RADIER</SheetTab>
        <SheetTab $w={160} $size={12.7}>TABELAS E FÓRMULAS</SheetTab>
        <BarSep $ml={0} />
        <BarSlot $w={16} $ml={34}><PlusCircle /></BarSlot>
        <BarSlot $w={3} $ml={118}><Dots /></BarSlot>
        <HScroll>
          <HButton $w={15}><Tri dir="l" /></HButton>
          <HThumb />
          <HButton $w={14} $ml={1}><Tri dir="r" /></HButton>
        </HScroll>
      </SheetBar>

      <StatusBar>
        <StatusText>Pronto</StatusText>
        <Slot $w={15} $ml={19}><MacroIcon /></Slot>
        <Slot $w={15} $ml={17}><AccessIcon /></Slot>
        <StatusText $ml={3}>Acessibilidade: investigar</StatusText>
        <Grow />
        <ViewButton $w={40} $active><NormalViewIcon /></ViewButton>
        <ViewButton $w={40}><PageViewIcon /></ViewButton>
        <ViewButton $w={40}><BreakViewIcon /></ViewButton>
        <Slot $w={9} $ml={6}><MinusSmall /></Slot>
        <ZoomTrack><ZoomThumb /><ZoomTick /></ZoomTrack>
        <Slot $w={9}><PlusSmall /></Slot>
        <ZoomValue>80%</ZoomValue>
        <Slot $w={14} />
      </StatusBar>
    </Window>
  );
}
